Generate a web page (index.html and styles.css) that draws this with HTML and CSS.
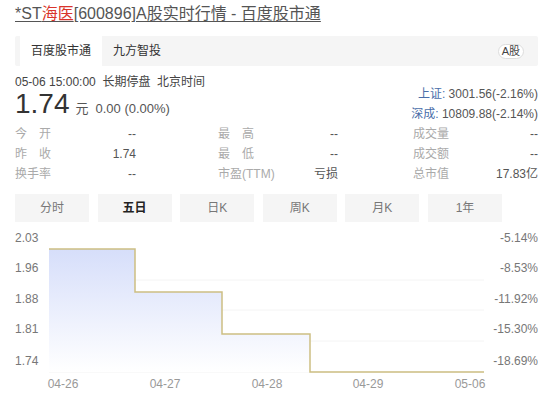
FILE: index.html
```html
<!DOCTYPE html>
<html lang="zh-CN">
<head>
  <meta charset="UTF-8">
  <title>*ST海医[600896]A股实时行情 - 百度股市通</title>
  <link rel="stylesheet" href="styles.css">
</head>
<body>
  <div class="page">
    <a class="title" href="#">*ST<span class="red">海医</span>[600896]A股实时行情 - 百度股市通</a>

    <div class="topbar">
      <span class="tab active">百度股市通</span>
      <span class="tab">九方智投</span>
      <span class="pill">A股</span>
    </div>

    <div class="quote">
      <div class="quote-left">
        <div class="time">05-06 15:00:00&nbsp; 长期停盘&nbsp; 北京时间</div>
        <div class="price"><span class="big">1.74</span><span class="unit">元</span><span class="chg">0.00 (0.00%)</span></div>
      </div>
      <div class="quote-right">
        <div><span class="idx">上证:</span> 3001.56(-2.16%)</div>
        <div><span class="idx">深成:</span> 10809.88(-2.14%)</div>
      </div>
    </div>

    <div class="stats">
      <div class="stat"><span class="lbl">今　开</span><span class="val">--</span></div>
      <div class="stat"><span class="lbl">最　高</span><span class="val">--</span></div>
      <div class="stat"><span class="lbl">成交量</span><span class="val">--</span></div>
      <div class="stat"><span class="lbl">昨　收</span><span class="val">1.74</span></div>
      <div class="stat"><span class="lbl">最　低</span><span class="val">--</span></div>
      <div class="stat"><span class="lbl">成交额</span><span class="val">--</span></div>
      <div class="stat"><span class="lbl">换手率</span><span class="val">--</span></div>
      <div class="stat"><span class="lbl">市盈(TTM)</span><span class="val">亏损</span></div>
      <div class="stat"><span class="lbl">总市值</span><span class="val">17.83亿</span></div>
    </div>

    <div class="ktabs">
      <span class="ktab">分时</span>
      <span class="ktab on">五日</span>
      <span class="ktab">日K</span>
      <span class="ktab">周K</span>
      <span class="ktab">月K</span>
      <span class="ktab">1年</span>
    </div>

    <svg class="chart" width="523" height="174" viewBox="0 0 523 174">
      <defs>
        <linearGradient id="area" x1="0" y1="0" x2="0" y2="1">
          <stop offset="0" stop-color="#d6defa"/>
          <stop offset="1" stop-color="#ffffff"/>
        </linearGradient>
      </defs>
      <g class="grid">
        <line x1="34" y1="58" x2="469" y2="58"/>
        <line x1="34" y1="88" x2="469" y2="88"/>
        <line x1="34" y1="119" x2="469" y2="119"/>
        <line x1="34" y1="150" x2="469" y2="150"/>
      </g>
      <path class="area" d="M34 27H120V70H207V112H295V150H34Z"/>
      <path class="line" d="M34 27H120V70H207V112H295V150H469"/>
      <g class="ylab">
        <text x="0" y="20">2.03</text>
        <text x="0" y="50">1.96</text>
        <text x="0" y="81">1.88</text>
        <text x="0" y="111">1.81</text>
        <text x="0" y="143">1.74</text>
      </g>
      <g class="ylab right">
        <text x="523" y="20">-5.14%</text>
        <text x="523" y="50">-8.53%</text>
        <text x="523" y="81">-11.92%</text>
        <text x="523" y="111">-15.30%</text>
        <text x="523" y="143">-18.69%</text>
      </g>
      <g class="xlab">
        <text x="48" y="166">04-26</text>
        <text x="150" y="166">04-27</text>
        <text x="252" y="166">04-28</text>
        <text x="353" y="166">04-29</text>
        <text x="455" y="166">05-06</text>
      </g>
    </svg>
  </div>
</body>
</html>
```

FILE: styles.css
```css
body { margin: 0; background: #fff; color: #555; font-family: 'Liberation Sans', 'Noto Sans CJK SC', sans-serif; font-size: 12px; }
.page { width: 523px; padding: 4px 12px 0 15px; }

.title { display: block; font-size: 16px; line-height: 20px; color: #555; text-decoration: underline; text-underline-offset: 2px; }
.title .red { color: #d9342b; }

.topbar { display: flex; align-items: center; height: 30px; margin-top: 12px; padding: 0 5px; background: #f5f5f5; border-radius: 2px; }
.tab { height: 30px; line-height: 30px; padding: 0 11px; color: #333; }
.tab.active { background: #fff; }
.pill { margin-left: auto; margin-right: 9px; padding: 0 3px; height: 13px; line-height: 13px; font-size: 11px; border: 1px solid #ddd; border-radius: 8px; background: #fff; color: #444; }

.quote { display: flex; justify-content: space-between; margin-top: 8px; }
.time { line-height: 16px; color: #444; }
.price { height: 28px; line-height: 28px; white-space: nowrap; }
.big { font-size: 28px; color: #333; }
.unit { font-size: 13px; margin-left: 6px; color: #555; }
.chg { font-size: 13px; margin-left: 7px; color: #555; }
.quote-right { padding-top: 10px; text-align: right; line-height: 20px; color: #555; }
.idx { color: #4a6ea9; }

.stats { display: grid; grid-template-columns: 203px 195px 125px; }
.stat { display: flex; justify-content: space-between; height: 20px; line-height: 20px; }
.stat:nth-child(3n+1) { width: 121px; }
.stat:nth-child(3n+2) { width: 120px; }
.lbl { color: #aaa; }
.val { color: #555; }

.ktabs { display: grid; grid-template-columns: repeat(6, 74px); column-gap: 8.6px; margin-top: 10px; }
.ktab { height: 28px; line-height: 28px; text-align: center; background: #f5f5f5; color: #777; }
.ktab.on { color: #222; font-weight: bold; }

.chart { display: block; }
.chart text { font-family: 'Liberation Sans', sans-serif; font-size: 12px; }
.grid line { stroke: #f4f4f4; stroke-width: 1; }
.area { fill: url(#area); }
.line { fill: none; stroke: #cdbf82; stroke-width: 1.5; }
.ylab text { fill: #777; }
.ylab.right text { text-anchor: end; }
.xlab text { fill: #999; text-anchor: middle; }
```
